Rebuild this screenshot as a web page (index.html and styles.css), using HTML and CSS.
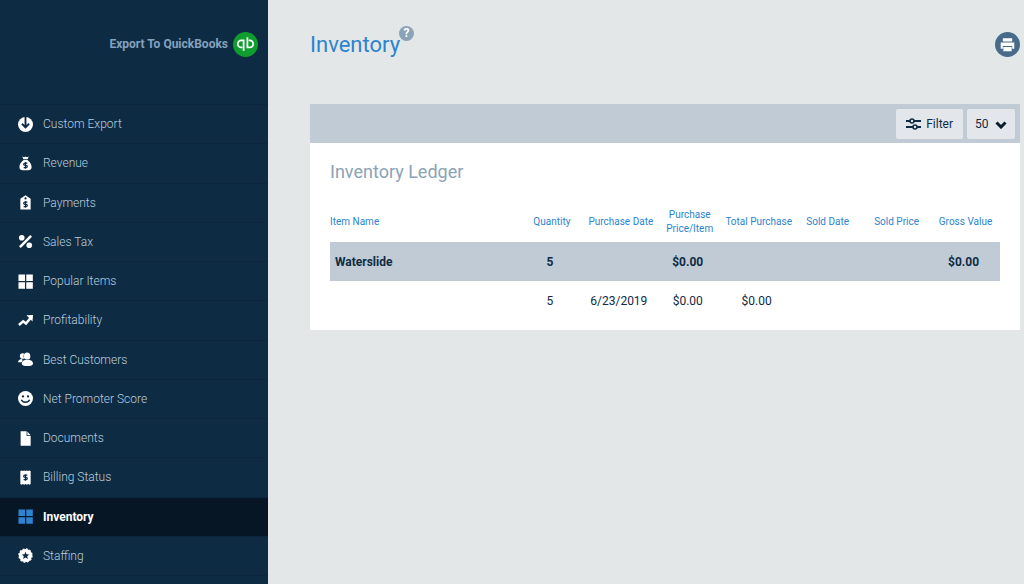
FILE: index.html
```
<!DOCTYPE html>
<html lang="en">
<head>
  <meta charset="UTF-8">
  <title>Inventory</title>
  <link rel="stylesheet" href="styles.css">
</head>
<body>
  <aside class="sidebar">
    <a class="export" href="#">
      Export To QuickBooks
      <svg class="qb" viewBox="0 0 24 24">
        <circle cx="12" cy="12" r="12" fill="#0f9d2f"/>
        <g fill="none" stroke="#fff" stroke-width="1.7">
          <path d="M10.600 8H8a3.400 3.400 0 0 0 0 6.800h.9M10.200 7.200V18"/>
          <path d="M13.400 14.800H16A3.400 3.400 0 0 0 16 8h-.9M13.800 15.600V5"/>
        </g>
      </svg>
    </a>
    <nav class="menu">
      <a href="#">
        <svg viewBox="0 0 16 16"><circle cx="8" cy="8" r="8"/><path class="cut" d="M8 0v11M4.200 7.200L8 11l3.800-3.800"/></svg>
        Custom Export
      </a>
      <a href="#">
        <svg viewBox="0 0 16 16"><path d="M4.500.5l2 .8L8 .6l1.500.7 2-.8-1.300 3H5.800zM6 4.300h4c2.500 1.700 4.500 4.500 4.500 7.500 0 2.500-1.500 3.500-3.500 3.500H5c-2 0-3.500-1-3.500-3.500 0-3 2-5.800 4.500-7.500z"/><path class="dollar" d="M10 7.500H7.300a1.200 1.200 0 0 0 0 2.400h1.400a1.200 1.200 0 0 1 0 2.400H6M8 6.500v7"/></svg>
        Revenue
      </a>
      <a href="#">
        <svg viewBox="0 0 16 16"><path fill-rule="evenodd" d="M8 .3L13.500 4v11.500h-11V4zM8 2.500a1.200 1.200 0 1 0 0 2.400 1.200 1.200 0 0 0 0-2.400z"/><path class="dollar" d="M10 7.500H7.300a1.200 1.200 0 0 0 0 2.400h1.400a1.200 1.200 0 0 1 0 2.400H6M8 6.500v7"/></svg>
        Payments
      </a>
      <a href="#">
        <svg viewBox="0 0 16 16"><circle cx="4" cy="4" r="3"/><circle cx="12" cy="12" r="3"/><path class="line" d="M14 2L2 14"/></svg>
        Sales Tax
      </a>
      <a href="#">
        <svg viewBox="0 0 16 16"><path d="M.5.5h7v7h-7zM8.800.5h7v7h-7zM.5 8.800h7v7h-7zM8.800 8.800h7v7h-7z"/></svg>
        Popular Items
      </a>
      <a href="#">
        <svg viewBox="0 0 16 16"><path class="line" d="M1 12.800l4.500-4 3 2.400 5-6"/><path d="M9 2.500l7-.5-.5 7z"/></svg>
        Profitability
      </a>
      <a href="#">
        <svg viewBox="0 0 16 16"><circle cx="5" cy="4.200" r="3"/><path d="M0 11c0-2 1.800-3.500 4.500-3.500L5 11z"/><g class="front"><ellipse cx="9.700" cy="4.500" rx="3.400" ry="4"/><path d="M4 12.500c0-2.800 2.500-4.300 6-4.300s6 1.500 6 4.300c0 1.500-2.500 2.500-6 2.500s-6-1-6-2.500z"/></g></svg>
        Best Customers
      </a>
      <a href="#">
        <svg viewBox="0 0 16 16"><circle cx="8" cy="8" r="8"/><circle class="hole" cx="5.300" cy="5.800" r="1.200"/><circle class="hole" cx="10.700" cy="5.800" r="1.200"/><path class="smile" d="M3.500 9.300c1.800 3.600 7.200 3.600 9 0"/></svg>
        Net Promoter Score
      </a>
      <a href="#">
        <svg viewBox="0 0 16 16"><path d="M2.800.3h6.400v5h4.300v10.400H2.800zM10 .5l3.500 4H10z"/></svg>
        Documents
      </a>
      <a href="#">
        <svg viewBox="0 0 16 16"><path d="M2.500 1l1.400-.6 1.300.6 1.400-.6L8 1l1.400-.6 1.400.6 1.300-.6 1.400.6v14l-1.400.6-1.300-.6-1.400.6L8 15l-1.400.6-1.400-.6-1.300.6-1.400-.6z"/><path class="dollar" d="M10 5.500H7.300a1.200 1.200 0 0 0 0 2.400h1.400a1.200 1.200 0 0 1 0 2.400H6M8 4.500v7"/></svg>
        Billing Status
      </a>
      <a class="active" href="#">
        <svg viewBox="0 0 16 16"><path d="M.5.5h7v7h-7zM8.800.5h7v7h-7zM.5 8.800h7v7h-7zM8.800 8.800h7v7h-7z"/></svg>
        Inventory
      </a>
      <a href="#">
        <svg viewBox="0 0 16 16"><circle cx="8" cy="8" r="7"/><circle class="teeth" cx="8" cy="8" r="7"/><path class="hole" d="M8 4l1.100 2.700 2.900.2-2.200 1.800.7 2.900L8 10l-2.500 1.600.7-2.900L4 6.900l2.900-.2z"/></svg>
        Staffing
      </a>
    </nav>
  </aside>

  <main>
    <header class="page-head">
      <h1>Inventory</h1>
      <button class="icon-btn help" aria-label="Help">?</button>
      <button class="icon-btn print" aria-label="Print">
        <svg viewBox="0 0 24 24">
          <circle cx="12" cy="12" r="12" fill="#486b8a"/>
          <path fill="#fff" d="M7.500 6h9v3h-9zM5.500 10h13v6h-2v-2.500h-9V16h-2zM8 14.500h8v4H8z"/>
        </svg>
      </button>
    </header>

    <section class="panel">
      <div class="toolbar">
        <button class="filter">
          <svg viewBox="0 0 15 14" fill="none" stroke="#0f2b44" stroke-width="2">
            <path d="M0 4h4M8 4h7M0 10h7M11 10h4"/>
            <circle cx="6" cy="4" r="2" stroke-width="1.600"/><circle cx="9" cy="10" r="2" stroke-width="1.600"/>
          </svg>
          Filter
        </button>
        <div class="page-size">
          <select aria-label="Rows per page">
            <option>50</option>
            <option>100</option>
          </select>
          <svg viewBox="0 0 12 8"><path d="M1.500 1.500L6 6l4.500-4.500" fill="none" stroke="#0a1c2e" stroke-width="3"/></svg>
        </div>
      </div>

      <div class="ledger">
        <h2>Inventory Ledger</h2>
        <table>
          <thead>
            <tr>
              <th>Item Name</th>
              <th>Quantity</th>
              <th>Purchase Date</th>
              <th>Purchase Price/Item</th>
              <th>Total Purchase</th>
              <th>Sold Date</th>
              <th>Sold Price</th>
              <th>Gross Value</th>
            </tr>
          </thead>
          <tbody>
            <tr class="group">
              <td>Waterslide</td><td>5</td><td></td><td>$0.00</td><td></td><td></td><td></td><td>$0.00</td>
            </tr>
            <tr>
              <td></td><td>5</td><td>6/23/2019</td><td>$0.00</td><td>$0.00</td><td></td><td></td><td></td>
            </tr>
          </tbody>
        </table>
      </div>
    </section>
  </main>
</body>
</html>
```
FILE: styles.css
```
* { box-sizing: border-box; }
body {
  margin: 0;
  display: flex;
  min-height: 100vh;
  background: #e3e7e8;
  color: #0f2b44;
  font-family: Roboto, "Liberation Sans", sans-serif;
  font-size: 12px;
}
h1, h2 { margin: 0; font-weight: 400; }
button, select { font: inherit; color: inherit; border: 0; border-radius: 2px; background: #e3e7eb; cursor: pointer; }

/* sidebar */
.sidebar { flex: 0 0 268px; background: #0e2b44; }
.export {
  display: flex;
  align-items: center;
  justify-content: flex-end;
  gap: 5px;
  height: 104px;
  padding: 0 10px 16px 0;
  color: #84a2bd;
  font-weight: 700;
  text-decoration: none;
}
.qb { width: 25px; height: 25px; }
.menu { display: grid; grid-auto-rows: 1fr; min-height: 472px; border-bottom: 1px solid #0b263d; }
.menu a {
  display: flex;
  align-items: center;
  gap: 10px;
  padding-left: 18px;
  border-top: 1px solid #0b263d;
  color: #b9cddd;
  font-weight: 300;
  text-decoration: none;
}
.menu svg { width: 15px; height: 15px; fill: #fff; }
.menu .active { background: #071625; color: #fff; font-weight: 700; }
.menu .active svg { fill: #2d83cf; }
.menu .cut { fill: none; stroke: #0e2b44; stroke-width: 2; }
.menu .dollar { fill: none; stroke: #0e2b44; stroke-width: 1.3; }
.menu .line { fill: none; stroke: #fff; stroke-width: 2.6; }
.menu .front { stroke: #0e2b44; stroke-width: 1; paint-order: stroke; }
.menu .hole { fill: #0e2b44; }
.menu .smile { fill: none; stroke: #0e2b44; stroke-width: 1.5; }
.menu .teeth { fill: none; stroke: #fff; stroke-width: 1.4; stroke-dasharray: 2 1.7; }

/* content */
main { flex: 1; min-width: 0; padding: 0 4px 0 42px; }
.page-head { display: flex; align-items: center; height: 104px; padding-bottom: 16px; }
h1 { color: #2d83cf; font-size: 22px; }
.icon-btn { padding: 0; border-radius: 50%; }
.help { width: 15px; height: 15px; margin: 0 0 22px -1px; background: #8ba3b7; color: #fff; font-size: 12px; font-weight: 700; line-height: 15px; }
.print { margin-left: auto; width: 25px; height: 25px; }
.print svg { display: block; }

.panel { background: #fff; }
.toolbar { display: flex; justify-content: flex-end; gap: 4px; padding: 5px 5px 4px; background: #c0cbd5; }
.filter { display: flex; align-items: center; gap: 5px; height: 30px; padding: 0 10px; }
.filter svg { width: 15px; height: 14px; }
.page-size { position: relative; }
.page-size select { appearance: none; width: 48px; height: 30px; padding: 0 8px; }
.page-size svg { position: absolute; right: 8px; top: 12px; width: 12px; height: 8px; pointer-events: none; }

.ledger { padding: 18px 20px 10px; }
h2 { margin-bottom: 19px; color: #8ba3b7; font-size: 18px; line-height: 22px; }
table { width: 100%; table-layout: fixed; border-collapse: collapse; text-align: center; }
th { width: 10.3%; height: 40px; padding: 0; color: #2d83cf; font-size: 10px; font-weight: 400; line-height: 14px; }
td { height: 39px; padding: 0 4px 0 0; }
th:first-child { width: 28%; text-align: left; }
td:first-child { padding-left: 5px; text-align: left; }
.group { background: #c0cbd5; font-weight: 700; }
```
